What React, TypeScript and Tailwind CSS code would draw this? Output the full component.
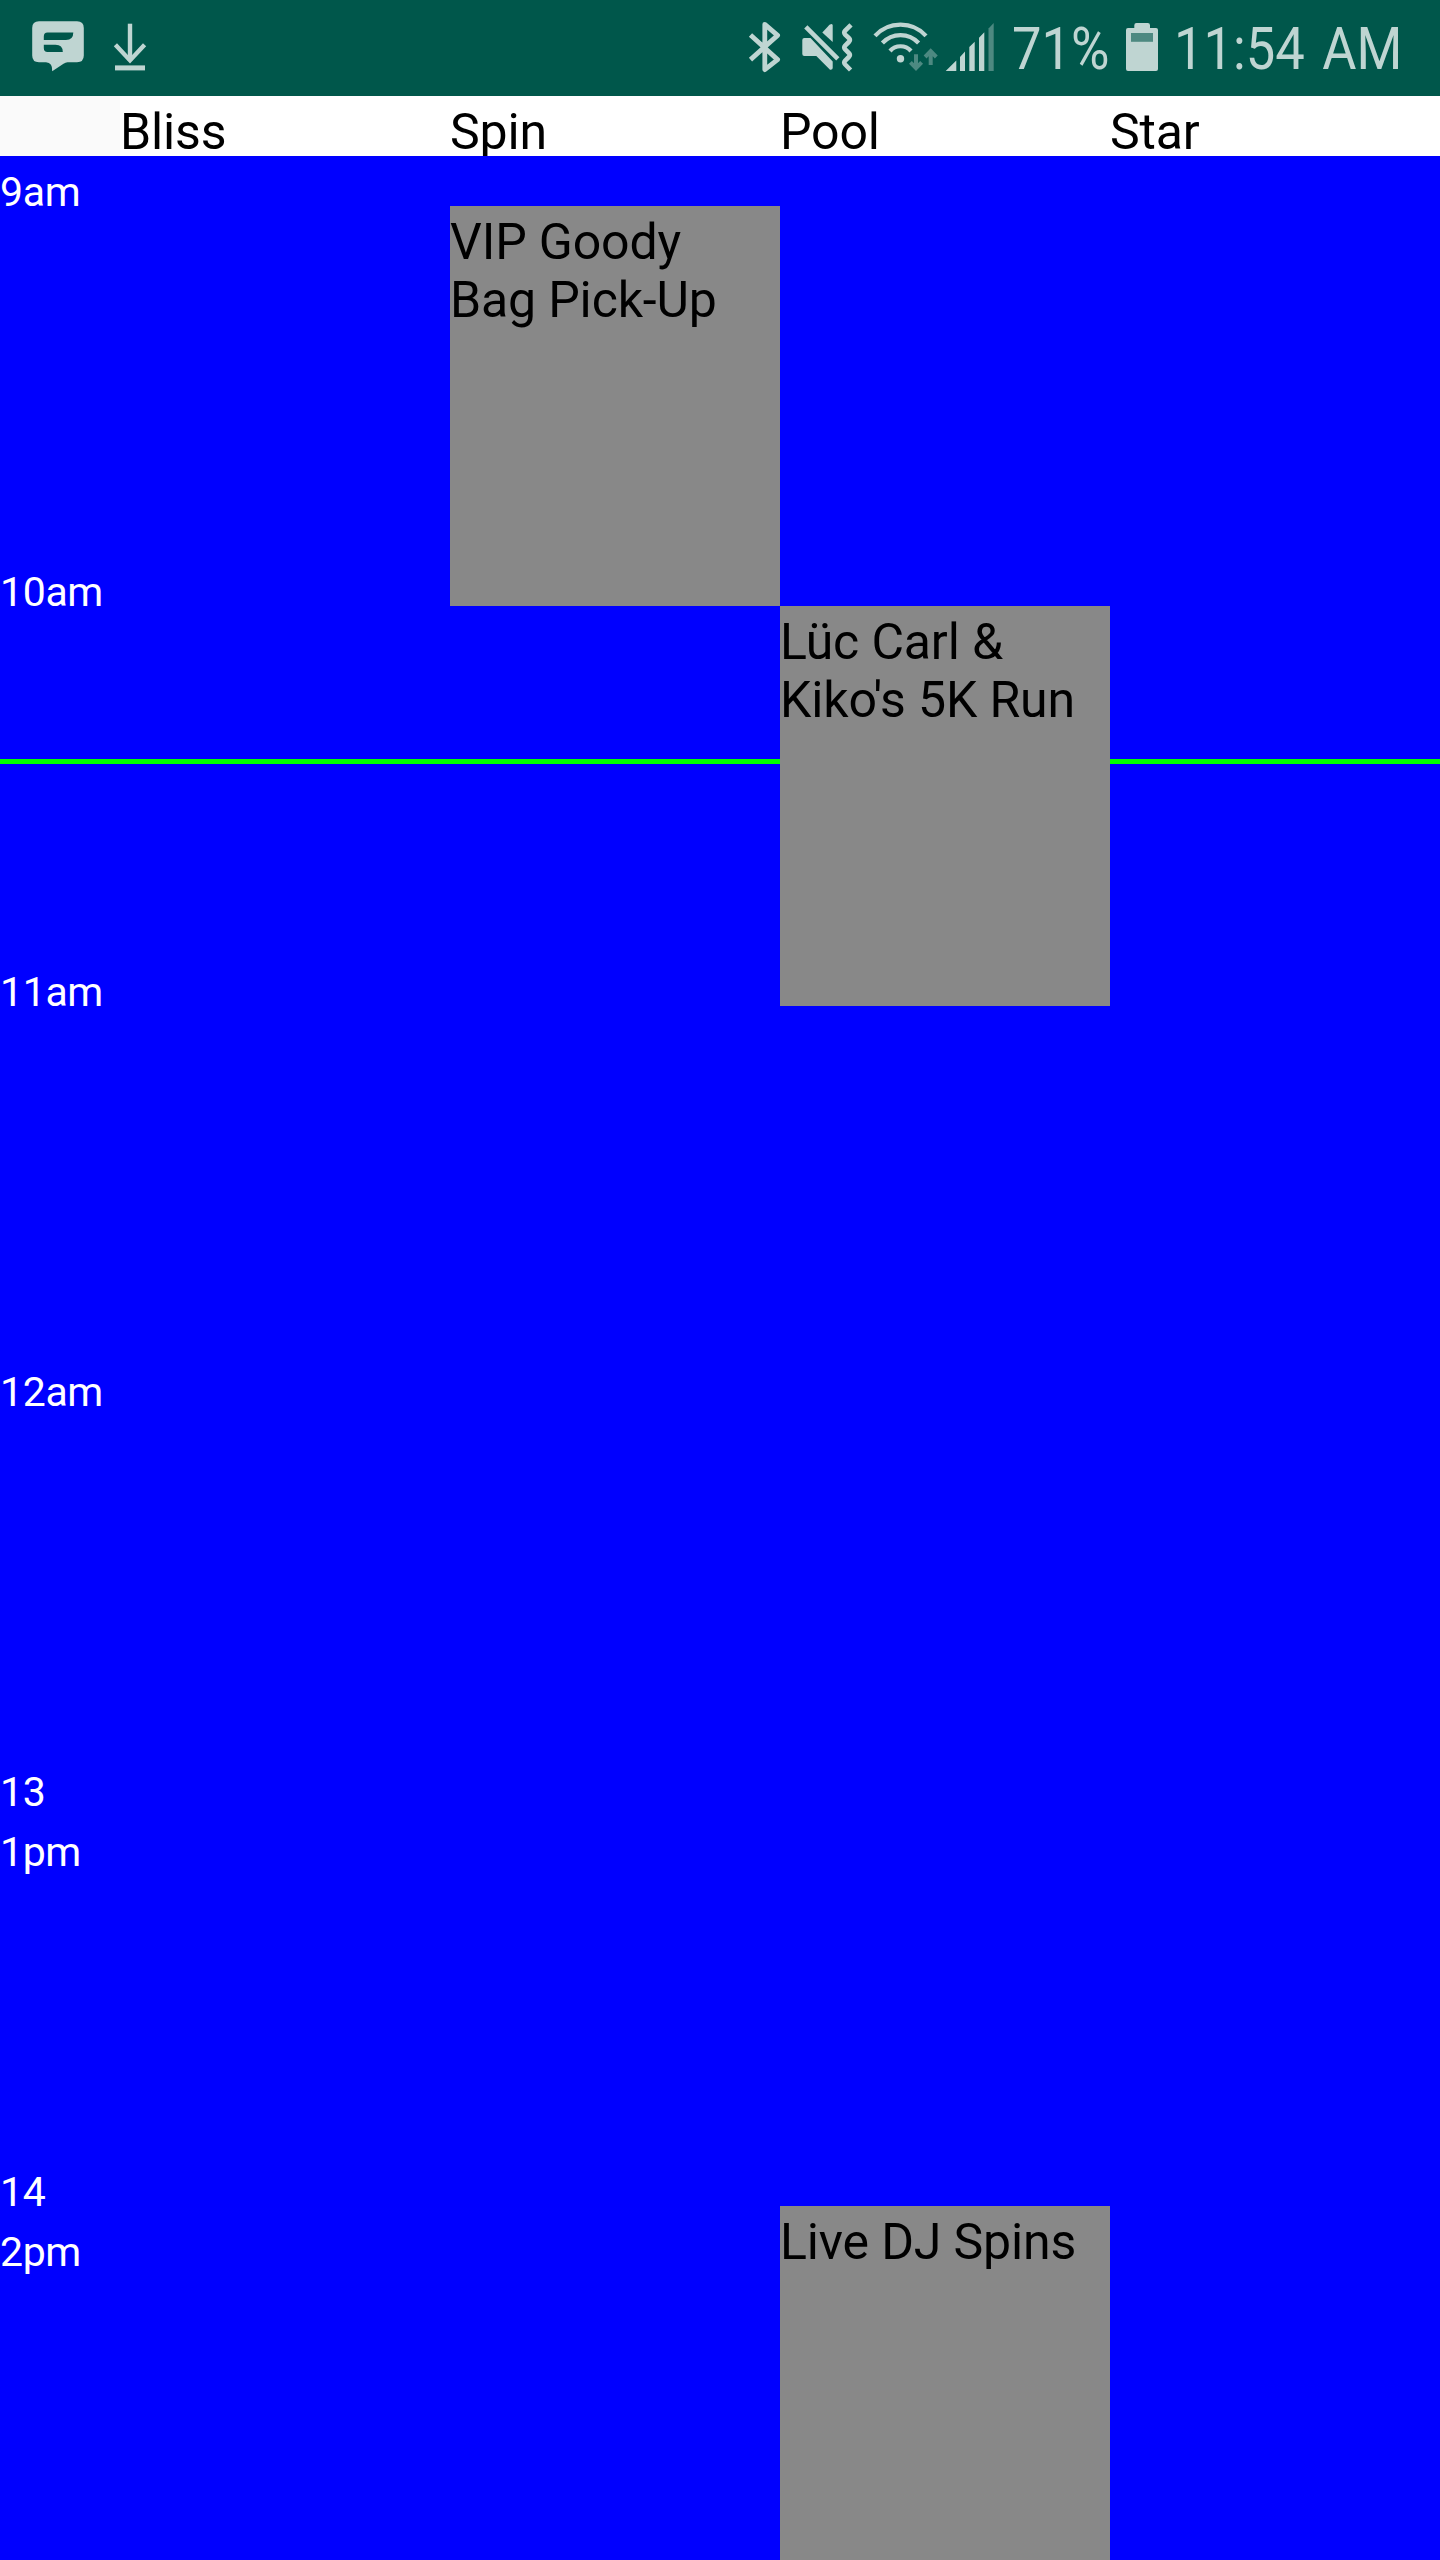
import React from "react";

type Booking = { title: string; gap: string; height: string };
type Venue = { name: string; bookings: Booking[] };

const venues: Venue[] = [
  { name: "Bliss", bookings: [] },
  { name: "Spin", bookings: [{ title: "VIP Goody Bag Pick-Up", gap: "mt-[50px]", height: "h-[400px]" }] },
  {
    name: "Pool",
    bookings: [
      { title: "Lüc Carl & Kiko's 5K Run", gap: "mt-[450px]", height: "h-[400px]" },
      { title: "Live DJ Spins", gap: "mt-[1200px]", height: "h-[354px]" },
    ],
  },
  { name: "Star", bookings: [] },
];

const hours: string[][] = [["9am"], ["10am"], ["11am"], ["12am"], ["13", "1pm"], ["14", "2pm"]];

const LIGHT = "#bfd5d2";
const DIM = "#4d8981";

function MessageIcon() {
  return (
    <svg className="ml-[30px] h-24 w-[56px]" viewBox="30 0 56 96" fill={LIGHT}>
      <path
        fillRule="evenodd"
        d="M39 21.3H77Q83.8 21.3 83.8 28V55.5Q83.8 62.2 77 62.2H67.5Q65.5 62.2 63.5 63.7L52.2 71.3Q52.8 62.5 46 62.2H39Q32.2 62.2 32.2 55.5V28Q32.2 21.3 39 21.3ZM47.5 32.6Q43.8 32.6 43.8 36.5V40H66Q73.3 40 73.3 32.6ZM43.8 44.8V48Q43.8 52 47.5 52H62.8Q62.8 44.8 55.5 44.8Z"
      />
    </svg>
  );
}

function DownloadIcon() {
  return (
    <svg className="ml-[24px] h-24 w-[40px]" viewBox="110 0 40 96" fill="none" stroke={LIGHT}>
      <path d="M130 23.7V61" strokeWidth="4.4" />
      <path d="M115.4 44.8L130 60.4L144.6 44.8" strokeWidth="4.4" />
      <path d="M115 67.9H145" strokeWidth="5" />
    </svg>
  );
}

function BluetoothIcon() {
  return (
    <svg className="h-24 w-[50px]" viewBox="745 0 50 96" fill="none" stroke={LIGHT} strokeWidth="4.8" strokeLinejoin="round">
      <path d="M750.5 35L777.6 59.6L764.8 69.6V24.4L777.6 35.4L750.5 59.6" />
    </svg>
  );
}

function MuteVibrateIcon() {
  return (
    <svg className="h-24 w-[75px]" viewBox="795 0 75 96" fill={LIGHT}>
      <path d="M804.3 38H810.5L832.7 61.5V68Q832.7 70 830 69.7L816.3 56H804.3Q802.3 56 802.3 54V40Q802.3 38 804.3 38Z" />
      <path d="M822.3 32.5L829.5 24.8Q832.7 22.7 832.7 25.5V42Z" />
      <path d="M805.8 26.8L837.8 58.8" stroke={LIGHT} strokeWidth="4.6" />
      <path
        d="M851 24.8L845.2 30.6Q843.4 32.6 845.2 34.6L848.8 38Q850.8 40 848.8 42L845.2 45.5Q843.4 47.5 845.2 49.5L848.8 53Q850.8 55 848.8 57L845.2 60.5Q843.4 62.5 845.2 64.5L850.6 70"
        fill="none"
        stroke={LIGHT}
        strokeWidth="4.6"
      />
    </svg>
  );
}

function WifiIcon() {
  return (
    <svg className="h-24 w-[72px]" viewBox="870 0 72 96" fill="none" stroke={LIGHT} strokeWidth="4.2">
      <path d="M875 35.8A34.7 34.7 0 0 1 926 35.8" />
      <path d="M882.4 43A24.6 24.6 0 0 1 918.6 43" />
      <path d="M890 51A14 14 0 0 1 911 51" />
      <circle cx="900.5" cy="58.8" r="3.7" fill={LIGHT} stroke="none" />
      <path d="M916 54.3V68M910.4 62.4L916 68.2L921.6 62.4M930.7 65V51.5M925.1 57L930.7 51.2L936.3 57" stroke={DIM} strokeWidth="4" />
    </svg>
  );
}

function SignalIcon() {
  return (
    <svg className="h-24 w-[56px]" viewBox="942 0 56 96" fill={LIGHT}>
      <path d="M945.7 71L956.3 60.4V71ZM960 71V57L965 51.5V71ZM969.3 71V47L974.7 41.7V71ZM979 71V37.8L984.3 32.3V71Z" />
      <path d="M988.5 71V28.5L993.7 23V71Z" fill={DIM} />
    </svg>
  );
}

function BatteryIcon() {
  return (
    <svg className="h-24 w-[48px]" viewBox="1118 0 48 96" fill={LIGHT}>
      <path d="M1134.3 28V25.2Q1134.3 23 1136.5 23H1147.8Q1150 23 1150 25.2V28H1156Q1158 28 1158 30V69Q1158 71 1156 71H1128Q1126 71 1126 69V30Q1126 28 1128 28Z" />
      <path d="M1131 33H1153V41.8H1131Z" fill={DIM} />
    </svg>
  );
}

function StatusBar() {
  return (
    <div className="flex h-24 bg-[#00574b] text-[60px] leading-[98px] whitespace-nowrap text-[#bfd5d2]">
      <MessageIcon />
      <DownloadIcon />
      <div className="ml-auto flex">
        <BluetoothIcon />
        <MuteVibrateIcon />
        <WifiIcon />
        <SignalIcon />
        <div className="w-[120px] pl-[14px]">
          <div className="w-max origin-left scale-x-[0.875]">71%</div>
        </div>
        <BatteryIcon />
        <div className="w-[274px] pl-[8px]">
          <div className="w-max origin-left scale-x-[0.875] [word-spacing:5px]">11:54 AM</div>
        </div>
      </div>
    </div>
  );
}

export default function App() {
  return (
    <div className="flex h-[2560px] w-[1440px] flex-col overflow-hidden bg-[#0000ff] font-['Roboto',sans-serif]">
      <StatusBar />
      <div className="flex h-[60px] shrink-0 overflow-hidden bg-white text-[50px] leading-[48px] tracking-[-0.15px] text-black">
        <div className="w-[120px] bg-[#fafafa]" />
        {venues.map((venue) => (
          <div key={venue.name} className="w-[330px] pt-[12px]">
            {venue.name}
          </div>
        ))}
      </div>
      <div className="relative flex flex-1 overflow-hidden">
        <div className="absolute inset-x-0 top-[603px] h-[5px] bg-[#00ff00]" />
        <div className="w-[120px] text-[41px] leading-[60px] tracking-[-0.35px] text-white">
          {hours.map((lines) => (
            <div key={lines[0]} className="h-[400px] pt-[6px]">
              {lines.map((line) => (
                <div key={line}>{line}</div>
              ))}
            </div>
          ))}
        </div>
        {venues.map((venue) => (
          <div key={venue.name} className="relative w-[330px]">
            <div className="flex flex-col">
              {venue.bookings.map((booking) => (
                <div
                  key={booking.title}
                  className={`${booking.gap} ${booking.height} bg-[#888888] pt-[7px] pr-2 text-[50px] leading-[58px] tracking-[-0.15px] text-black`}
                >
                  {booking.title}
                </div>
              ))}
            </div>
          </div>
        ))}
      </div>
    </div>
  );
}
